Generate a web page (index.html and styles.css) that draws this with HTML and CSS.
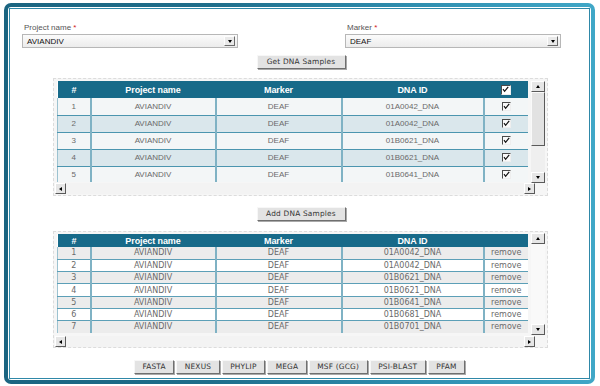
FILE: index.html
```html
<!DOCTYPE html>
<html>
<head>
<meta charset="utf-8">
<link rel="stylesheet" href="styles.css">
</head>
<body>
<div class="frame">
 <div class="inner">
  <div class="content">
   <div class="form-row">
    <div class="field">
     <div class="label">Project name <span class="req">*</span></div>
     <div class="select"><span class="sel-text">AVIANDIV</span><span class="sel-btn"><i class="tri-down"></i></span></div>
    </div>
    <div class="field">
     <div class="label">Marker <span class="req">*</span></div>
     <div class="select"><span class="sel-text">DEAF</span><span class="sel-btn"><i class="tri-down"></i></span></div>
    </div>
   </div>

   <div class="btn-row top-btn"><button class="btn">Get DNA Samples</button></div>

   <div class="grid-box grid-one">
    <div class="grid-main">
     <div class="viewport vp-one">
      <table class="grid g1">
       <colgroup><col class="c-num"><col class="c-proj"><col class="c-mark"><col class="c-dna"><col class="c-last"></colgroup>
       <thead><tr><th>#</th><th>Project name</th><th>Marker</th><th>DNA ID</th><th><span class="cb cb-head"><svg width="9" height="9" viewBox="0 0 9 9"><path d="M2 4.2 L3.6 6.3 L7.2 1.8" fill="none" stroke="#111" stroke-width="1.2"/></svg></span></th></tr></thead>
       <tbody>
        <tr><td>1</td><td>AVIANDIV</td><td>DEAF</td><td>01A0042_DNA</td><td><span class="cb"><svg width="9" height="9" viewBox="0 0 9 9"><path d="M2 4.2 L3.6 6.3 L7.2 1.8" fill="none" stroke="#111" stroke-width="1.2"/></svg></span></td></tr>
        <tr><td>2</td><td>AVIANDIV</td><td>DEAF</td><td>01A0042_DNA</td><td><span class="cb"><svg width="9" height="9" viewBox="0 0 9 9"><path d="M2 4.2 L3.6 6.3 L7.2 1.8" fill="none" stroke="#111" stroke-width="1.2"/></svg></span></td></tr>
        <tr><td>3</td><td>AVIANDIV</td><td>DEAF</td><td>01B0621_DNA</td><td><span class="cb"><svg width="9" height="9" viewBox="0 0 9 9"><path d="M2 4.2 L3.6 6.3 L7.2 1.8" fill="none" stroke="#111" stroke-width="1.2"/></svg></span></td></tr>
        <tr><td>4</td><td>AVIANDIV</td><td>DEAF</td><td>01B0621_DNA</td><td><span class="cb"><svg width="9" height="9" viewBox="0 0 9 9"><path d="M2 4.2 L3.6 6.3 L7.2 1.8" fill="none" stroke="#111" stroke-width="1.2"/></svg></span></td></tr>
        <tr><td>5</td><td>AVIANDIV</td><td>DEAF</td><td>01B0641_DNA</td><td><span class="cb"><svg width="9" height="9" viewBox="0 0 9 9"><path d="M2 4.2 L3.6 6.3 L7.2 1.8" fill="none" stroke="#111" stroke-width="1.2"/></svg></span></td></tr>
       </tbody>
      </table>
     </div>
     <div class="vscroll vs-one">
      <span class="sb-btn"><i class="tri-up"></i></span>
      <span class="sb-thumb"></span>
      <span class="sb-track"></span>
      <span class="sb-btn"><i class="tri-down"></i></span>
     </div>
    </div>
    <div class="hscroll">
     <span class="sb-btn"><i class="tri-left"></i></span>
     <span class="sb-track"></span>
     <span class="sb-btn"><i class="tri-right"></i></span>
    </div>
   </div>

   <div class="btn-row add-btn"><button class="btn">Add DNA Samples</button></div>

   <div class="grid-box grid-two">
    <div class="grid-main">
     <div class="viewport vp-two">
      <table class="grid g2">
       <colgroup><col class="c-num"><col class="c-proj"><col class="c-mark"><col class="c-dna"><col class="c-last"></colgroup>
       <thead><tr><th>#</th><th>Project name</th><th>Marker</th><th>DNA ID</th><th></th></tr></thead>
       <tbody>
        <tr><td>1</td><td>AVIANDIV</td><td>DEAF</td><td>01A0042_DNA</td><td>remove</td></tr>
        <tr><td>2</td><td>AVIANDIV</td><td>DEAF</td><td>01A0042_DNA</td><td>remove</td></tr>
        <tr><td>3</td><td>AVIANDIV</td><td>DEAF</td><td>01B0621_DNA</td><td>remove</td></tr>
        <tr><td>4</td><td>AVIANDIV</td><td>DEAF</td><td>01B0621_DNA</td><td>remove</td></tr>
        <tr><td>5</td><td>AVIANDIV</td><td>DEAF</td><td>01B0641_DNA</td><td>remove</td></tr>
        <tr><td>6</td><td>AVIANDIV</td><td>DEAF</td><td>01B0681_DNA</td><td>remove</td></tr>
        <tr><td>7</td><td>AVIANDIV</td><td>DEAF</td><td>01B0701_DNA</td><td>remove</td></tr>
       </tbody>
      </table>
     </div>
     <div class="vscroll vs-two">
      <span class="sb-btn"><i class="tri-up"></i></span>
      <span class="sb-track"></span>
      <span class="sb-btn"><i class="tri-down"></i></span>
     </div>
    </div>
    <div class="hscroll">
     <span class="sb-btn"><i class="tri-left"></i></span>
     <span class="sb-track"></span>
     <span class="sb-btn"><i class="tri-right"></i></span>
    </div>
   </div>

   <div class="btn-row export-row">
    <button class="btn">FASTA</button>
    <button class="btn">NEXUS</button>
    <button class="btn">PHYLIP</button>
    <button class="btn">MEGA</button>
    <button class="btn">MSF (GCG)</button>
    <button class="btn">PSI-BLAST</button>
    <button class="btn">PFAM</button>
   </div>
  </div>
 </div>
</div>
</body>
</html>
```
FILE: styles.css
```css
html, body {
  margin: 0;
  padding: 0;
  background: #ffffff;
}
body {
  font-family: "Liberation Sans", Arial, sans-serif;
  width: 600px;
  height: 386px;
  overflow: hidden;
}
.frame {
  margin: 3px 0 0 4px;
  width: 591px;
  height: 381px;
  box-sizing: border-box;
  padding: 4px;
  border-radius: 7px;
  background: linear-gradient(90deg, #1b6581 0%, #1f6e8b 35%, #2f8fb0 70%, #40a7c7 100%);
}
.inner {
  background: #ffffff;
  height: 100%;
  box-sizing: border-box;
  padding: 1px;
  border-radius: 3px;
}
.content {
  height: 100%;
  box-sizing: border-box;
  border: 1px solid #2f88a8;
  background: #ffffff;
  display: flex;
  flex-direction: column;
}
/* form */
.form-row {
  display: flex;
  gap: 107px;
  margin-top: 13px;
  padding-left: 12px;
}
.field {
  width: 216px;
  display: flex;
  flex-direction: column;
}
.label {
  font-size: 8px;
  line-height: 12px;
  color: #555;
  padding-left: 2px;
}
.req { color: #d02020; }
.select {
  height: 14px;
  box-sizing: border-box;
  border: 1px solid #b7b7b7;
  background: linear-gradient(#fbfbfb, #ececec);
  display: flex;
  align-items: center;
  justify-content: space-between;
  padding: 0 1px 0 4px;
}
.sel-text {
  font-size: 8px;
  color: #111;
}
.sel-btn {
  width: 11px;
  height: 10px;
  box-sizing: border-box;
  margin-right: 1px;
  background: #e9e9e9;
  border: 1px solid;
  border-color: #fdfdfd #6c6c6c #6c6c6c #fdfdfd;
  display: flex;
  align-items: center;
  justify-content: center;
}
/* triangles */
.tri-down, .tri-up, .tri-left, .tri-right {
  display: block;
  width: 0;
  height: 0;
}
.tri-down { border-left: 2.5px solid transparent; border-right: 2.5px solid transparent; border-top: 3px solid #000; }
.tri-up { border-left: 2.5px solid transparent; border-right: 2.5px solid transparent; border-bottom: 3px solid #000; }
.tri-left { border-top: 2.5px solid transparent; border-bottom: 2.5px solid transparent; border-right: 3px solid #000; }
.tri-right { border-top: 2.5px solid transparent; border-bottom: 2.5px solid transparent; border-left: 3px solid #000; }
/* buttons */
.btn-row {
  display: flex;
  justify-content: center;
  gap: 2px;
  padding-left: 3px;
}
.top-btn { margin-top: 7px; }
.add-btn { margin-top: 11px; }
.export-row { margin-top: 12px; padding-left: 0; }
.btn {
  font-family: "DejaVu Sans", Verdana, sans-serif;
  font-size: 7.4px;
  color: #333;
  height: 14px;
  box-sizing: border-box;
  margin: 0;
  padding: 0 7.5px;
  background: #e3e3e3;
  border: 1px solid;
  border-color: #f7f7f7 #6f6f6f #6f6f6f #f7f7f7;
  box-shadow: 1px 1px 0 #a9a9a9;
  line-height: 12px;
  letter-spacing: 0.2px;
}
.top-btn .btn, .add-btn .btn { width: 89px; padding: 0; }
/* grid boxes */
.grid-box {
  margin-left: 43px;
  width: 495px;
  box-sizing: border-box;
  border: 1px dashed #dcdcdc;
  background: #f6f6f6;
  padding: 2px 0 0 3px;
}
.grid-one { margin-top: 9px; height: 118px; }
.grid-two { margin-top: 10px; height: 117px; }
.grid-main {
  display: flex;
  align-items: flex-start;
}
.viewport {
  width: 471px;
  overflow: hidden;
  background: #fff;
}
.vp-one { height: 101px; }
.vp-two { height: 99px; }
.grid {
  width: 471px;
  table-layout: fixed;
  border-collapse: collapse;
}
.c-num { width: 33px; }
.c-proj { width: 125px; }
.c-mark { width: 126px; }
.c-dna { width: 142px; }
.c-last { width: 45px; }
.grid th {
  background: #176a89;
  color: #fff;
  font-weight: bold;
  font-size: 9px;
  padding: 0;
  text-align: center;
  letter-spacing: -0.1px;
}
.grid td {
  padding: 0;
  text-align: center;
  color: #666;
  border-left: 2px solid #7fb2c4;
  border-bottom: 1px solid #4b95af;
  white-space: nowrap;
}
.grid td:first-child { border-left: 1px solid #9cc2d0; }
.grid td:last-child { border-right: 1px solid #4b95af; }
.g1 thead tr { height: 17px; }
.g1 tbody tr { height: 17px; }
.g1 td { font-size: 8px; color: #6a6a6a; }
.g1 tbody tr:nth-child(odd) td { background: #f3f6f7; }
.g1 tbody tr:nth-child(even) td { background: #dae7ec; }
.g2 thead tr { height: 13px; }
.g2 tbody tr { height: 12.3px; }
.g2 th { font-size: 9px; line-height: 12px; }
.g2 td {
  font-family: "DejaVu Sans", Verdana, sans-serif;
  font-size: 8px;
  line-height: 11px;
  color: #6a6a6a;
  border-bottom-color: #5c9fb7;
}
.g2 tbody tr:nth-child(odd) td { background: #ececec; }
.g2 tbody tr:nth-child(even) td { background: #ffffff; }
/* checkboxes */
.cb {
  display: inline-block;
  width: 9px;
  height: 9px;
  box-sizing: border-box;
  border-top: 1px solid #4a4a4a;
  border-left: 1px solid #4a4a4a;
  border-right: 1px solid #eeeeee;
  border-bottom: 1px solid #eeeeee;
  background: #fafafa;
  vertical-align: middle;
  position: relative;
}
.cb svg { position: absolute; left: -1px; top: -1px; }
.cb-head { background: #ffffff; width: 10px; height: 10px; }
/* scrollbars */
.sb-btn {
  width: 14px;
  height: 11px;
  box-sizing: border-box;
  background: #e6e6e6;
  border: 1px solid;
  border-color: #ffffff #5a5a5a #5a5a5a #ffffff;
  display: flex;
  align-items: center;
  justify-content: center;
  flex: none;
}
.vscroll {
  margin-left: 3px;
  width: 14px;
  display: flex;
  flex-direction: column;
  background: #efefef;
}
.vs-one { height: 102px; }
.vs-two { height: 102px; margin-top: -1px; background: #f9f9f9; }
.sb-thumb {
  height: 54px;
  box-sizing: border-box;
  background: #e2e2e2;
  border: 1px solid;
  border-color: #fafafa #5a5a5a #5a5a5a #fafafa;
  flex: none;
}
.vscroll .sb-track { flex: 1; }
.hscroll {
  margin-left: -2px;
  margin-top: 0;
  width: 480px;
  height: 11px;
  display: flex;
  background: #f3f3f3;
}
.hscroll .sb-btn { width: 11px; height: 11px; }
.hscroll .sb-track { flex: 1; }
.grid-two .hscroll { margin-top: 1px; }
```
